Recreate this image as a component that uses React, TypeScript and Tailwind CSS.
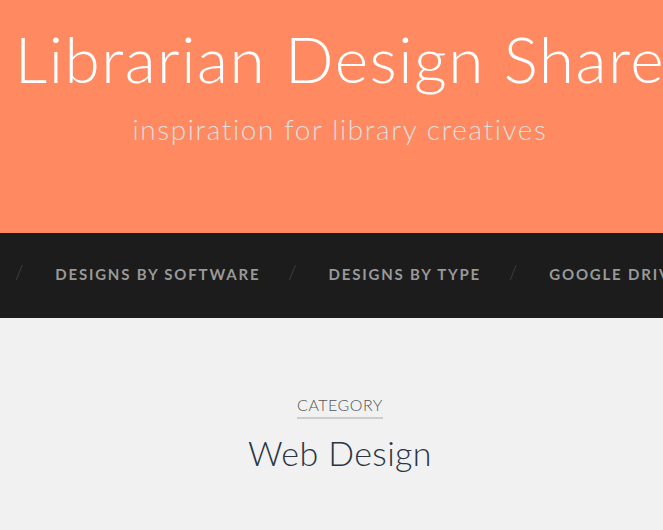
const navItems = ["Designs by Software", "Designs by Type", "Google Drive Designs"];

export default function App() {
  return (
    <div className="w-[663px] h-[530px] overflow-hidden bg-[#f1f1f1]">
      <div className="w-[680px] font-['Lato','Open_Sans',sans-serif]">
        <header className="bg-[#ff8a62] h-[233px] flex flex-col items-center pt-[21px]">
          <h1 className="whitespace-nowrap text-white text-[64px] leading-[76px] font-light tracking-[1.5px]">
            Librarian Design Share
          </h1>
          <p className="mt-[14px] whitespace-nowrap text-[#dcdedc] text-[28px] leading-[36px] font-light tracking-[1.6px]">
            inspiration for library creatives
          </p>
        </header>

        <nav className="bg-[#1c1c1c] h-[85px] flex items-center pb-[3px] whitespace-nowrap">
          <ul className="flex items-center pl-[15px]">
            {navItems.map((item) => (
              <li key={item} className="flex items-center">
                <span className="text-[#4a4a4a] text-[19px] leading-[20px] font-light -mt-[4px]">/</span>
                <a className="ml-[32px] mr-[28px] uppercase text-[#999999] text-[15px] font-bold tracking-[1.8px]">
                  {item}
                </a>
              </li>
            ))}
          </ul>
        </nav>

        <main className="flex flex-col items-center pt-[76px]">
          <span className="uppercase text-[#555] text-[16px] leading-[22px] font-light tracking-[0.5px] border-b-2 border-[#cccccc] pb-[1px]">
            Category
          </span>
          <h2 className="mt-[14px] text-[#283645] text-[34px] leading-[40px] font-light tracking-[0.4px]">
            Web Design
          </h2>
        </main>
      </div>
    </div>
  );
}
